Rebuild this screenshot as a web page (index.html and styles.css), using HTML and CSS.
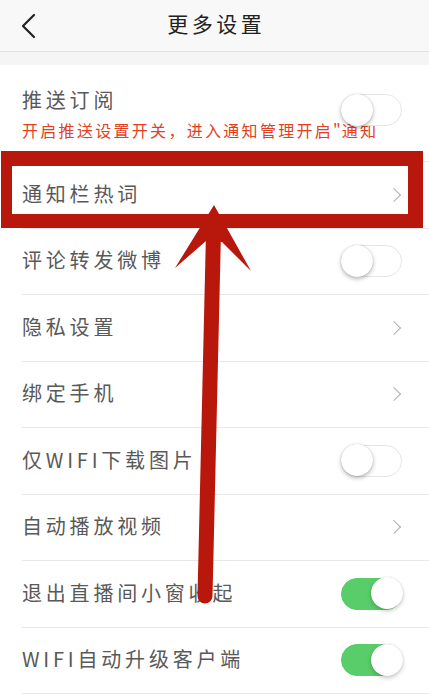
FILE: index.html
```html
<!DOCTYPE html>
<html lang="zh">
<head>
<meta charset="utf-8">
<title>更多设置</title>
<link rel="stylesheet" href="styles.css">
</head>
<body>
<div class="page">
  <header class="topbar">
    <div class="back">
      <svg width="16" height="26" viewBox="0 0 16 26"><path d="M14 2 L3 13 L14 24" fill="none" stroke="#222" stroke-width="2.2" stroke-linecap="round" stroke-linejoin="round"/></svg>
    </div>
    <h1 class="title">更多设置</h1>
    <div></div>
  </header>
  <div class="spacer"></div>
  <ul class="list">
    <li class="row row-tall">
      <div class="texts">
        <span class="label">推送订阅</span>
        <span class="sub">开启推送设置开关，进入通知管理开启<span class="q">"</span>通知</span>
      </div>
      <span class="toggle toggle-up"></span>
    </li>
    <li class="row"><span class="label">通知栏热词</span><span class="chev"></span></li>
    <li class="row"><span class="label">评论转发微博</span><span class="toggle"></span></li>
    <li class="row"><span class="label">隐私设置</span><span class="chev"></span></li>
    <li class="row"><span class="label">绑定手机</span><span class="chev"></span></li>
    <li class="row"><span class="label">仅WIFI下载图片</span><span class="toggle"></span></li>
    <li class="row"><span class="label">自动播放视频</span><span class="chev"></span></li>
    <li class="row"><span class="label">退出直播间小窗收起</span><span class="toggle on"></span></li>
    <li class="row"><span class="label">WIFI自动升级客户端</span><span class="toggle on"></span></li>
  </ul>
  <div class="highlight"></div>
  <svg class="arrow" width="429" height="695" viewBox="0 0 429 695">
    <line x1="213.5" y1="232" x2="205" y2="596" stroke="#b8170c" stroke-width="15" stroke-linecap="round"/>
    <polygon points="214,205 251,271 222,242 206,241 175,268" fill="#b8170c"/>
  </svg>
</div>
</body>
</html>
```

FILE: styles.css
```css
* { box-sizing: border-box; }
html, body { margin: 0; padding: 0; background: #fff; }
body { font-family: "Noto Sans CJK SC", "Noto Sans", sans-serif; }
.page { position: relative; width: 429px; height: 695px; overflow: hidden; background: #fff; }

.topbar {
  height: 52px;
  background: #f8f8f8;
  border-bottom: 1px solid #e2e2e2;
  display: grid;
  grid-template-columns: 1fr auto 1fr;
  align-items: center;
}
.back { padding-left: 20px; display: flex; align-items: center; height: 100%; padding-top: 1px; }
.title {
  margin: 0;
  font-size: 21px;
  font-weight: 400;
  color: #222;
  letter-spacing: 3.5px;
  margin-right: -3.5px;
  line-height: 1;
  padding-bottom: 4px;
}
.spacer { height: 13px; background: #f5f5f5; }

.list { list-style: none; margin: 0; padding: 0; }
.row {
  height: 66.5px;
  margin-left: 22px;
  padding-right: 27px;
  border-bottom: 1px solid #e9e9e9;
  display: flex;
  align-items: center;
  justify-content: space-between;
}
.row-tall { height: 97px; align-items: flex-start; position: relative; }
.texts { display: flex; flex-direction: column; padding-top: 25px; }
.label {
  font-size: 20px;
  color: #595959;
  letter-spacing: 3.8px;
  line-height: 1;
  white-space: nowrap;
  padding-bottom: 2px;
}
.sub {
  margin-top: 10px;
  font-size: 16px;
  color: #e2401f;
  letter-spacing: 2.3px;
  white-space: nowrap;
  line-height: 1;
}
.sub .q { letter-spacing: 0; margin-right: 1px; }

.toggle {
  position: relative;
  flex: none;
  width: 61px;
  height: 32px;
  border-radius: 16px;
  background: #fff;
  border: 1.5px solid #e6e6e6;
}
.toggle::after {
  content: "";
  position: absolute;
  left: -1.5px;
  top: -1.5px;
  width: 32px;
  height: 32px;
  border-radius: 50%;
  background: #fff;
  box-shadow: 0 2px 4px rgba(0,0,0,0.28), 0 0 1px rgba(0,0,0,0.25);
}
.toggle.on { background: #58cd69; border-color: #58cd69; }
.toggle.on::after { left: auto; right: -1.5px; box-shadow: 0 2px 4px rgba(0,0,0,0.22), 0 0 1px rgba(0,0,0,0.2); }
.toggle-up { position: absolute; right: 27px; top: 29px; }

.chev {
  flex: none;
  width: 10px;
  height: 10px;
  border-top: 1.5px solid #aeaeae;
  border-right: 1.5px solid #aeaeae;
  transform: rotate(45deg);
  margin-right: 3px;
}

.highlight {
  position: absolute;
  left: 1px;
  top: 151px;
  width: 422px;
  height: 77px;
  border-style: solid;
  border-color: #b8170c;
  border-width: 15px 15px 14px 11px;
}
.arrow { position: absolute; left: 0; top: 0; pointer-events: none; }
```
